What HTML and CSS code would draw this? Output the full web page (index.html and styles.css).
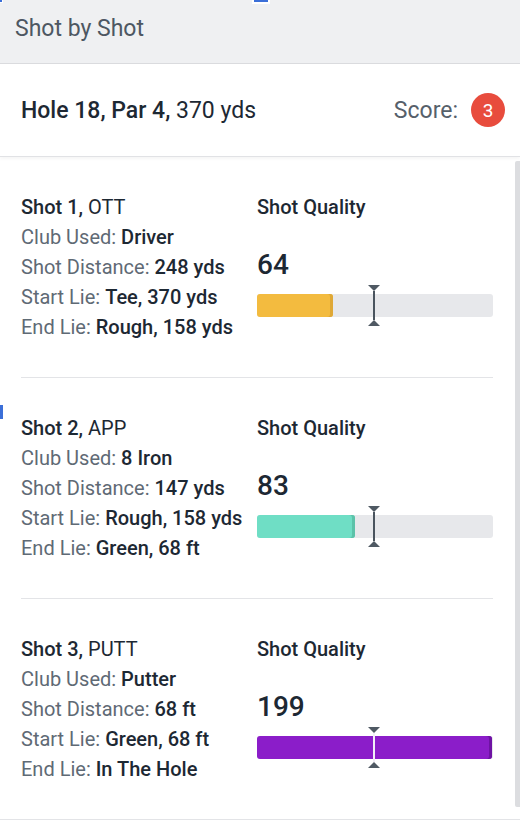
FILE: index.html
```
<!DOCTYPE html>
<html>
<head>
<meta charset="utf-8">
<link rel="stylesheet" href="styles.css">
</head>
<body>
<div class="panel">
  <div class="header">Shot by Shot</div>
  <div class="hole-row">
    <div class="hole"><b>Hole 18, Par 4,</b> 370 yds</div>
    <div class="score">Score: <span class="badge">3</span></div>
  </div>
  <div class="shots-wrap">
    <div class="shots">
      <div class="shot">
        <div class="info">
          <div class="line title"><b>Shot 1,</b> OTT</div>
          <div class="line">Club Used: <b>Driver</b></div>
          <div class="line">Shot Distance: <b>248 yds</b></div>
          <div class="line">Start Lie: <b>Tee, 370 yds</b></div>
          <div class="line">End Lie: <b>Rough, 158 yds</b></div>
        </div>
        <div class="quality">
          <div class="q-title">Shot Quality</div>
          <div class="q-num">64</div>
          <div class="bar">
            <div class="fill fill-yellow" style="width: 32%"></div>
            <div class="marker"></div>
          </div>
        </div>
      </div>
      <div class="shot">
        <div class="info">
          <div class="line title"><b>Shot 2,</b> APP</div>
          <div class="line">Club Used: <b>8 Iron</b></div>
          <div class="line">Shot Distance: <b>147 yds</b></div>
          <div class="line">Start Lie: <b>Rough, 158 yds</b></div>
          <div class="line">End Lie: <b>Green, 68 ft</b></div>
        </div>
        <div class="quality">
          <div class="q-title">Shot Quality</div>
          <div class="q-num">83</div>
          <div class="bar">
            <div class="fill fill-teal" style="width: 41.5%"></div>
            <div class="marker"></div>
          </div>
        </div>
      </div>
      <div class="shot">
        <div class="info">
          <div class="line title"><b>Shot 3,</b> PUTT</div>
          <div class="line">Club Used: <b>Putter</b></div>
          <div class="line">Shot Distance: <b>68 ft</b></div>
          <div class="line">Start Lie: <b>Green, 68 ft</b></div>
          <div class="line">End Lie: <b>In The Hole</b></div>
        </div>
        <div class="quality">
          <div class="q-title">Shot Quality</div>
          <div class="q-num">199</div>
          <div class="bar">
            <div class="fill fill-purple" style="width: 99.5%"></div>
            <div class="marker marker-light"></div>
          </div>
        </div>
      </div>
    </div>
    <div class="scrollbar"></div>
  </div>
</div>
<div class="mark mark-top"></div>
<div class="mark mark-corner"></div>
<div class="mark mark-left"></div>
</body>
</html>
```
FILE: styles.css
```
* { box-sizing: border-box; }
html, body { margin: 0; padding: 0; background: #ffffff; }
body {
  font-family: Roboto, "Liberation Sans", Arial, sans-serif;
  color: #1d2833;
  width: 520px;
  height: 824px;
  overflow: hidden;
  position: relative;
}
.panel { width: 520px; }
.header {
  height: 64px;
  background: #eff0f2;
  border-bottom: 1px solid #dadbde;
  display: flex;
  align-items: center;
  padding-left: 15px;
  padding-bottom: 6px;
  font-size: 23px;
  color: #4d5762;
}
.hole-row {
  height: 93px;
  display: flex;
  align-items: center;
  justify-content: space-between;
  padding: 0 15px 0 21px;
  border-bottom: 1px solid #e1e2e5;
  box-shadow: 0 2px 3px rgba(0,0,0,0.04);
  position: relative;
  z-index: 1;
  background: #fff;
}
.hole { font-size: 23px; color: #1d2833; }
.hole b { font-weight: 500; }
.score {
  display: flex;
  align-items: center;
  gap: 13px;
  font-size: 23px;
  color: #56606a;
}
.badge {
  width: 34px;
  height: 34px;
  border-radius: 50%;
  background: #e84c3d;
  color: #fff;
  font-size: 19px;
  display: flex;
  align-items: center;
  justify-content: center;
}
.shots-wrap {
  display: flex;
  height: 663px;
  border-bottom: 1px solid #e3e4e7;
}
.shots {
  margin-left: 21px;
  width: 472px;
}
.shot {
  display: grid;
  grid-template-columns: 236px 236px;
  padding: 35px 0;
  height: 221px;
  border-bottom: 1px solid #e3e4e7;
}
.shot:last-child { border-bottom: none; }
.line {
  font-size: 20px;
  line-height: 30px;
  color: #5f6a75;
  white-space: nowrap;
}
.line b { font-weight: 500; color: #1d2833; }
.line.title { color: #1d2833; }
.q-title {
  font-size: 20px;
  line-height: 30px;
  font-weight: 500;
  color: #1d2833;
}
.q-num {
  margin-top: 28px;
  font-size: 28px;
  line-height: 30px;
  font-weight: 500;
  color: #1d2833;
}
.bar {
  margin-top: 14px;
  height: 23px;
  border-radius: 3px;
  background: #e7e8eb;
  position: relative;
}
.fill {
  height: 100%;
  border-radius: 3px;
}
.fill-yellow { background: #f3bb3f; box-shadow: inset -3px 0 0 #dfa836; }
.fill-teal { background: #6fdec5; box-shadow: inset -3px 0 0 #5cc2a9; }
.fill-purple { background: #8b1dc9; box-shadow: inset -3px 0 0 #6e13a3; }
.marker {
  position: absolute;
  left: 116px;
  top: -3px;
  width: 2px;
  height: 29px;
  background: #4a545e;
}
.marker::before, .marker::after {
  content: "";
  position: absolute;
  left: -5px;
  border-left: 6px solid transparent;
  border-right: 6px solid transparent;
}
.marker::before {
  top: -6px;
  border-top: 6px solid #4f5963;
}
.marker::after {
  bottom: -6px;
  border-bottom: 6px solid #4f5963;
}
.marker-light { background: #f2eef7; }
.scrollbar {
  margin-left: 22px;
  margin-top: 4px;
  width: 5px;
  height: 646px;
  background: #dcdde0;
  border-radius: 2px 0 0 2px;
}
.mark { position: absolute; background: #3b6fd8; }
.mark-top { left: 254px; top: 0; width: 14px; height: 2px; box-shadow: 0 0 0 2px #fff; }
.mark-corner { left: 0; top: 0; width: 2px; height: 2px; box-shadow: 0 0 0 1px #fff; }
.mark-left { left: 0; top: 405px; width: 3px; height: 14px; }
```
